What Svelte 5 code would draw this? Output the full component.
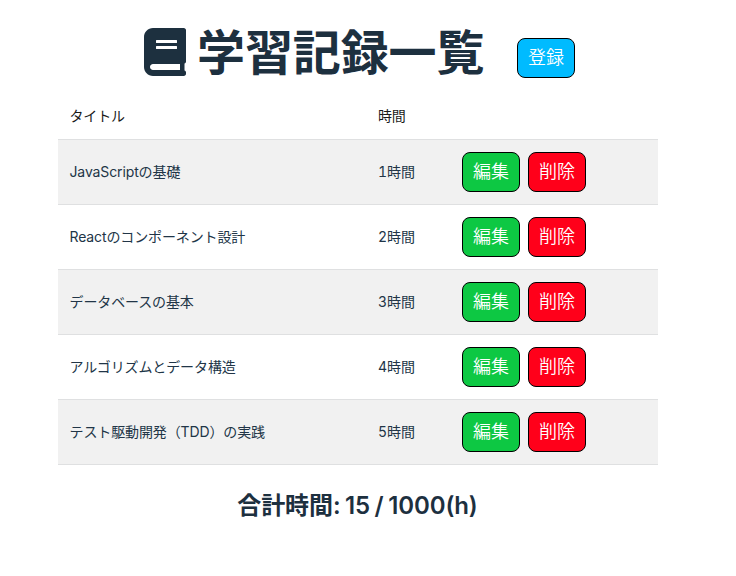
<script lang="ts">
  type StudyRecord = {
    id: number;
    title: string;
    time: number;
  };

  let records: StudyRecord[] = [
    { id: 1, title: 'JavaScriptの基礎', time: 1 },
    { id: 2, title: 'Reactのコンポーネント設計', time: 2 },
    { id: 3, title: 'データベースの基本', time: 3 },
    { id: 4, title: 'アルゴリズムとデータ構造', time: 4 },
    { id: 5, title: 'テスト駆動開発（TDD）の実践', time: 5 },
  ];

  const goal = 1000;

  $: total = records.reduce((sum, record) => sum + record.time, 0);

  function removeRecord(id: number) {
    records = records.filter((record) => record.id !== id);
  }
</script>

<main class="page">
  <header class="header">
    <svg class="book" viewBox="0 0 448 512" fill="currentColor" aria-hidden="true">
      <path d="M448 360V24c0-13.3-10.7-24-24-24H96C43 0 0 43 0 96v320c0 53 43 96 96 96h328c13.3 0 24-10.7 24-24v-16c0-7.5-6-14.3-16-18.7v-74.6c10-4.4 16-11.2 16-18.7zM128 134c0-3.3 2.7-6 6-6h212c3.3 0 6 2.7 6 6v20c0 3.3-2.7 6-6 6H134c-3.3 0-6-2.7-6-6v-20zm0 64c0-3.3 2.7-6 6-6h212c3.3 0 6 2.7 6 6v20c0 3.3-2.7 6-6 6H134c-3.3 0-6-2.7-6-6v-20zm256 250H96c-17.7 0-32-14.3-32-32 0-17.6 14.4-32 32-32h288z"></path>
    </svg>
    <h1>学習記録一覧</h1>
    <button class="button add">登録</button>
  </header>

  <table>
    <thead>
      <tr>
        <th class="col-title">タイトル</th>
        <th class="col-time">時間</th>
        <th></th>
      </tr>
    </thead>
    <tbody>
      {#each records as record (record.id)}
        <tr>
          <td class="title">{record.title}</td>
          <td class="time">{record.time}時間</td>
          <td>
            <div class="actions">
              <button class="button edit">編集</button>
              <button class="button delete" on:click={() => removeRecord(record.id)}>削除</button>
            </div>
          </td>
        </tr>
      {/each}
    </tbody>
  </table>

  <h2>合計時間: {total} / {goal}(h)</h2>
</main>

<style>
  :global(body) {
    background: #fff;
  }

  .page {
    box-sizing: border-box;
    width: 600px;
    margin-left: 58px;
    padding-top: 24px;
    font-family: Inter, "Noto Sans CJK JP", sans-serif;
    color: #213547;
  }

  .header {
    display: flex;
    height: 70px;
    padding-left: 86px;
    color: #1d303f;
  }

  .book {
    width: 42px;
    height: 48px;
    margin-top: 4px;
  }

  h1 {
    margin: 0 0 0 11px;
    font-size: 48px;
    font-weight: 700;
    line-height: 58px;
    letter-spacing: -0.1px;
    white-space: nowrap;
  }

  .button {
    box-sizing: border-box;
    width: 58px;
    height: 40px;
    padding: 0;
    border: 1px solid #000;
    border-radius: 8px;
    color: #fff;
    font-family: inherit;
    font-size: 18px;
    font-weight: 350;
    line-height: 36px;
    white-space: nowrap;
    cursor: pointer;
  }

  .add {
    margin: 14px 0 0 32.6px;
    background: #00bbff;
  }

  .edit {
    background: #0dc843;
  }

  .delete {
    background: #ff001a;
  }

  table {
    width: 100%;
    table-layout: fixed;
    border-collapse: separate;
    border-spacing: 0;
    font-size: 14px;
    line-height: 20px;
  }

  .col-title {
    width: 308px;
  }

  .col-time {
    width: 84px;
  }

  th,
  td {
    box-sizing: border-box;
    padding: 0 12px;
    border-bottom: 1px solid #dfe0e1;
    text-align: left;
    vertical-align: middle;
  }

  th {
    height: 46px;
    padding-bottom: 2px;
    color: #1a1a1a;
    font-weight: 400;
    letter-spacing: -0.15px;
  }

  td {
    height: 65px;
    font-weight: 400;
  }

  .col-title,
  .title {
    padding-left: 11.5px;
  }

  .title {
    padding-bottom: 1px;
    letter-spacing: -0.12px;
  }

  .time {
    padding-bottom: 1px;
    font-variant-numeric: tabular-nums;
    letter-spacing: -0.1px;
  }

  tbody tr:nth-child(odd) {
    background: #f1f1f1;
  }

  .actions {
    display: flex;
    gap: 8px;
  }

  h2 {
    margin: 23px 1px 0 0;
    color: #1d303f;
    font-size: 24px;
    font-weight: 600;
    line-height: 36px;
    letter-spacing: -0.1px;
    word-spacing: -1.4px;
    text-align: center;
  }
</style>
